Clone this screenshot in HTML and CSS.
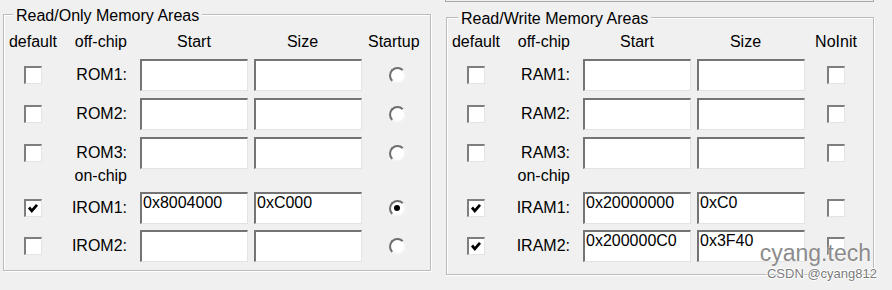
FILE: index.html
```html
<!DOCTYPE html>
<html>
<head>
<meta charset="utf-8">
<link rel="stylesheet" href="styles.css">
</head>
<body>
<div class="dialog">
  <section class="group group-ro">
    <div class="legend">Read/Only Memory Areas</div>
    <div class="row head">
      <span class="c1">default</span><span class="c2">off-chip</span><span class="c3">Start</span><span class="c4">Size</span><span class="c5">Startup</span>
    </div>
    <div class="row r1">
      <span class="c1"><span class="chk"></span></span><span class="c2">ROM1:</span>
      <span class="field"></span><span class="field"></span>
      <span class="c5"><span class="radio"></span></span>
    </div>
    <div class="row r2">
      <span class="c1"><span class="chk"></span></span><span class="c2">ROM2:</span>
      <span class="field"></span><span class="field"></span>
      <span class="c5"><span class="radio"></span></span>
    </div>
    <div class="row r2">
      <span class="c1"><span class="chk"></span></span><span class="c2">ROM3:</span>
      <span class="field"></span><span class="field"></span>
      <span class="c5"><span class="radio"></span></span>
    </div>
    <div class="row sub"><span class="c1"></span><span class="c2">on-chip</span></div>
    <div class="row r4">
      <span class="c1"><span class="chk on"><svg viewBox="0 0 18 18" width="18" height="18"><polyline points="5,8.5 7.8,11.8 13,5.8" fill="none" stroke="#000" stroke-width="2.8"/></svg></span></span><span class="c2">IROM1:</span>
      <span class="field">0x8004000</span><span class="field">0xC000</span>
      <span class="c5"><span class="radio on"></span></span>
    </div>
    <div class="row r5">
      <span class="c1"><span class="chk"></span></span><span class="c2">IROM2:</span>
      <span class="field"></span><span class="field"></span>
      <span class="c5"><span class="radio"></span></span>
    </div>
  </section>

  <div class="col-right">
    <div class="prev-edge"></div>
    <section class="group group-rw">
      <div class="legend">Read/Write Memory Areas</div>
      <div class="row head">
        <span class="c1">default</span><span class="c2">off-chip</span><span class="c3">Start</span><span class="c4">Size</span><span class="c5">NoInit</span>
      </div>
      <div class="row r1">
        <span class="c1"><span class="chk"></span></span><span class="c2">RAM1:</span>
        <span class="field"></span><span class="field"></span>
        <span class="c5"><span class="chk"></span></span>
      </div>
      <div class="row r2">
        <span class="c1"><span class="chk"></span></span><span class="c2">RAM2:</span>
        <span class="field"></span><span class="field"></span>
        <span class="c5"><span class="chk"></span></span>
      </div>
      <div class="row r2">
        <span class="c1"><span class="chk"></span></span><span class="c2">RAM3:</span>
        <span class="field"></span><span class="field"></span>
        <span class="c5"><span class="chk"></span></span>
      </div>
      <div class="row sub"><span class="c1"></span><span class="c2">on-chip</span></div>
      <div class="row r4">
        <span class="c1"><span class="chk on"><svg viewBox="0 0 18 18" width="18" height="18"><polyline points="5,8.5 7.8,11.8 13,5.8" fill="none" stroke="#000" stroke-width="2.8"/></svg></span></span><span class="c2">IRAM1:</span>
        <span class="field">0x20000000</span><span class="field">0xC0</span>
        <span class="c5"><span class="chk"></span></span>
      </div>
      <div class="row r5">
        <span class="c1"><span class="chk on"><svg viewBox="0 0 18 18" width="18" height="18"><polyline points="5,8.5 7.8,11.8 13,5.8" fill="none" stroke="#000" stroke-width="2.8"/></svg></span></span><span class="c2">IRAM2:</span>
        <span class="field">0x200000C0</span><span class="field">0x3F40</span>
        <span class="c5"><span class="chk"></span></span>
      </div>
    </section>
  </div>
</div>
<div class="watermark">
  <div class="wm-big">cyang.tech</div>
  <div class="wm-small">CSDN @cyang812</div>
</div>
</body>
</html>
```

FILE: styles.css
```css
html, body {
  margin: 0;
  padding: 0;
}
body {
  width: 892px;
  height: 290px;
  overflow: hidden;
  background: #f0f0f0;
  font-family: "Liberation Sans", Arial, sans-serif;
  font-size: 16px;
  line-height: 18px;
  color: #000;
  position: relative;
}
.dialog {
  display: flex;
  align-items: flex-start;
  padding-left: 3px;
  gap: 14px;
}
.group {
  position: relative;
  box-sizing: border-box;
  width: 428px;
  border: 1px solid #bcbcbc;
  box-shadow: inset 1px 1px 0 #fff, 1px 1px 0 #fff;
}
.group-ro {
  margin-top: 14px;
  height: 257px;
  padding-top: 18px;
}
.col-right {
  display: flex;
  flex-direction: column;
  width: 429px;
}
.prev-edge {
  box-sizing: border-box;
  height: 2px;
  width: 429px;
  border: 1px solid #a8a8a8;
  border-top: none;
}
.group-rw {
  margin-top: 15px;
  margin-left: 1px;
  height: 258px;
  padding-top: 15px;
}
.legend {
  position: absolute;
  top: -8px;
  left: 9px;
  padding: 0 3px;
  background: #f0f0f0;
  white-space: nowrap;
}
.group-rw .legend {
  top: -8px;
  left: 11px;
}
.row {
  display: grid;
  grid-template-columns: 58px 66px 108px 108px 1fr;
  column-gap: 6px;
  align-items: center;
  height: 32px;
}
.row.head {
  height: 18px;
}
.r1 { margin-top: 8px; }
.r2 { margin-top: 7px; }
.sub {
  height: 20px;
  margin-top: -2px;
  align-items: start;
}
.r4 { margin-top: 5px; }
.r5 { margin-top: 6px; }

.c1 {
  display: flex;
  justify-content: center;
  white-space: nowrap;
}
.c2 {
  text-align: right;
  padding-right: 7px;
  white-space: nowrap;
}
.c3 {
  text-align: center;
}
.c4 {
  text-align: center;
  padding-right: 11px;
}
.c5 {
  display: flex;
  justify-content: center;
  padding-right: 12px;
  white-space: nowrap;
}
.field {
  box-sizing: border-box;
  height: 32px;
  background: #fff;
  border-style: solid;
  border-width: 2px 1px 1px 2px;
  border-color: #747474 #e3e3e3 #e3e3e3 #747474;
  padding: 0 0 0 1px;
  white-space: nowrap;
  overflow: hidden;
}
.chk {
  box-sizing: border-box;
  display: block;
  width: 18px;
  height: 18px;
  background: #fff;
  border-style: solid;
  border-width: 2px 1px 1px 2px;
  border-color: #7e7e7e #e3e3e3 #e3e3e3 #7e7e7e;
  position: relative;
}
.chk svg {
  position: absolute;
  left: -2px;
  top: -2px;
}
.radio {
  box-sizing: border-box;
  display: block;
  width: 17px;
  height: 17px;
  margin-left: 8px;
  border-radius: 50%;
  background: #fff;
  border: 2px solid;
  border-color: #6e6e6e #f4f4f4 #f4f4f4 #6e6e6e;
  position: relative;
}
.radio.on::after {
  content: "";
  position: absolute;
  left: 3.5px;
  top: 3.5px;
  width: 6px;
  height: 6px;
  border-radius: 50%;
  background: #000;
}
.watermark {
  position: absolute;
  right: 15px;
  top: 242px;
  display: flex;
  flex-direction: column;
  align-items: flex-end;
  font-family: "Liberation Sans", Arial, sans-serif;
}
.wm-big {
  font-size: 23px;
  line-height: 23px;
  color: #8c8c8c;
  margin-right: 6px;
  text-shadow: 0 0 2px #fff;
}
.wm-small {
  font-size: 13px;
  line-height: 13px;
  color: #7a7a7a;
  margin-top: 2px;
  text-shadow: 1px 0 0 #fff, -1px 0 0 #fff, 0 1px 0 #fff, 0 -1px 0 #fff;
}
```
